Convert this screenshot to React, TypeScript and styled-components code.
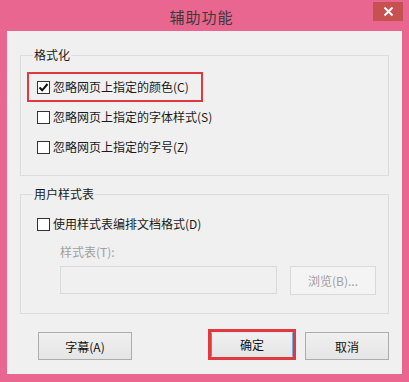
import styled, { createGlobalStyle } from "styled-components"

const GlobalStyle = createGlobalStyle`
  html, body {
    margin: 0;
    padding: 0;
    background: #e8668f;
  }
  body {
    font-family: "Noto Sans CJK SC", "Noto Sans", sans-serif;
    font-size: 12px;
    color: #1a1a1a;
  }
`

export default function App() {
  return (
    <Window>
      <GlobalStyle />
      <TitleBar>
        <span />
        <Title>辅助功能</Title>
        <CloseButton aria-label="关闭">
          <svg width="11" height="11" viewBox="0 0 11 11">
            <path d="M1.5 1.5 L9.5 9.5 M9.5 1.5 L1.5 9.5" stroke="#fff" strokeWidth="2" />
          </svg>
        </CloseButton>
      </TitleBar>

      <Content>
        <Group $top={16} $bottom={13} $paddingTop={9}>
          <Legend>格式化</Legend>
          <Row $highlight>
            <CheckBox $checked />
            <span>忽略网页上指定的颜色(C)</span>
          </Row>
          <Row>
            <CheckBox />
            <span>忽略网页上指定的字体样式(S)</span>
          </Row>
          <Row>
            <CheckBox />
            <span>忽略网页上指定的字号(Z)</span>
          </Row>
        </Group>

        <Group $top={10} $bottom={18} $paddingTop={7}>
          <Legend>用户样式表</Legend>
          <Row>
            <CheckBox />
            <span>使用样式表编排文档格式(D)</span>
          </Row>
          <DisabledLabel>样式表(T):</DisabledLabel>
          <FileRow>
            <PathInput disabled />
            <BrowseButton disabled>浏览(B)...</BrowseButton>
          </FileRow>
        </Group>

        <ButtonRow>
          <Button $width={94}>字幕(A)</Button>
          <Spacer />
          <Highlight>
            <DefaultButton>确定</DefaultButton>
          </Highlight>
          <Button $width={84}>取消</Button>
        </ButtonRow>
      </Content>
    </Window>
  )
}

function CheckBox({ $checked }: { $checked?: boolean }) {
  return (
    <Box>
      {$checked && (
        <svg width="11" height="11" viewBox="0 0 11 11">
          <path d="M1.5 5.5 L4.2 8.3 L9.5 2" stroke="#111" strokeWidth="2" fill="none" />
        </svg>
      )}
    </Box>
  )
}

const Window = styled.div`
  width: 409px;
  height: 382px;
  display: flex;
  flex-direction: column;
  box-sizing: border-box;
  padding: 0 7px 8px 7px;
`

const TitleBar = styled.div`
  height: 31px;
  margin: 0 -7px;
  display: grid;
  grid-template-columns: 1fr auto 1fr;
  align-items: start;
  padding-right: 6px;
`

const Title = styled.div`
  font-size: 15px;
  line-height: 18px;
  color: #3a3a3a;
  margin-top: 8px;
  letter-spacing: 1px;
`

const CloseButton = styled.div`
  justify-self: end;
  margin-top: 2px;
  width: 30px;
  height: 19px;
  background: #c75050;
  display: flex;
  align-items: center;
  justify-content: center;
`

const Content = styled.div`
  flex: 1;
  background: #f0f0f0;
  display: flex;
  flex-direction: column;
`

const Group = styled.fieldset<{ $top: number; $bottom: number; $paddingTop: number }>`
  margin: ${(p) => p.$top}px 13px 0 13px;
  padding: ${(p) => p.$paddingTop}px 0 ${(p) => p.$bottom}px 6px;
  border: 1px solid #dcdcdc;
  display: flex;
  flex-direction: column;
  align-items: flex-start;
`

const Legend = styled.legend`
  padding: 0 1px;
  margin-left: 6px;
  line-height: 16px;
  color: #1a1a1a;
`

const Row = styled.div<{ $highlight?: boolean }>`
  height: 30px;
  display: flex;
  align-items: center;
  gap: 3px;
  box-sizing: border-box;
  width: ${(p) => (p.$highlight ? "176px" : "auto")};
  padding-left: ${(p) => (p.$highlight ? "8px" : "10px")};
  border: ${(p) => (p.$highlight ? "2px solid #e0393e" : "none")};
  line-height: 16px;
  white-space: nowrap;
`

const Box = styled.span`
  width: 13px;
  height: 13px;
  box-sizing: border-box;
  border: 1px solid #333;
  background: #fff;
  display: flex;
  align-items: center;
  justify-content: center;
  flex: none;
`

const DisabledLabel = styled.div`
  margin: 5px 0 0 33px;
  line-height: 16px;
  color: #a0a0a0;
`

const FileRow = styled.div`
  display: flex;
  gap: 13px;
  margin: 6px 0 0 33px;
  align-items: flex-start;
`

const PathInput = styled.input`
  width: 217px;
  height: 28px;
  box-sizing: border-box;
  margin: 0;
  border: 1px solid #d9d9d9;
  background: #f0f0f0;
`

const BrowseButton = styled.button`
  width: 86px;
  height: 29px;
  box-sizing: border-box;
  border: 1px solid #d9d9d9;
  background: #f4f4f4;
  color: #a0a0a0;
  font-family: inherit;
  font-size: 12px;
  padding: 0;
`

const ButtonRow = styled.div`
  display: flex;
  align-items: flex-end;
  margin: 15px 13px 0 31px;
  gap: 9px;
`

const Spacer = styled.div`
  flex: 1;
`

const Button = styled.button<{ $width: number }>`
  width: ${(p) => p.$width}px;
  height: 28px;
  box-sizing: border-box;
  border: 1px solid #acacac;
  background: linear-gradient(#f0f0f0, #e5e5e5);
  font-family: inherit;
  font-size: 12px;
  color: #111;
  padding: 0;
`

const Highlight = styled.div`
  width: 88px;
  height: 31px;
  box-sizing: border-box;
  border: 3px solid #e0393e;
  display: flex;
`

const DefaultButton = styled.button`
  flex: 1;
  box-sizing: border-box;
  border: 1px solid #8a7fb0;
  border-right-color: #6ab0e6;
  border-top-color: #e6e6e6;
  border-bottom-color: #e6e6e6;
  background: linear-gradient(#f0f0f0, #e5e5e5);
  font-family: inherit;
  font-size: 12px;
  color: #111;
  padding: 0;
  margin: 0;
`
